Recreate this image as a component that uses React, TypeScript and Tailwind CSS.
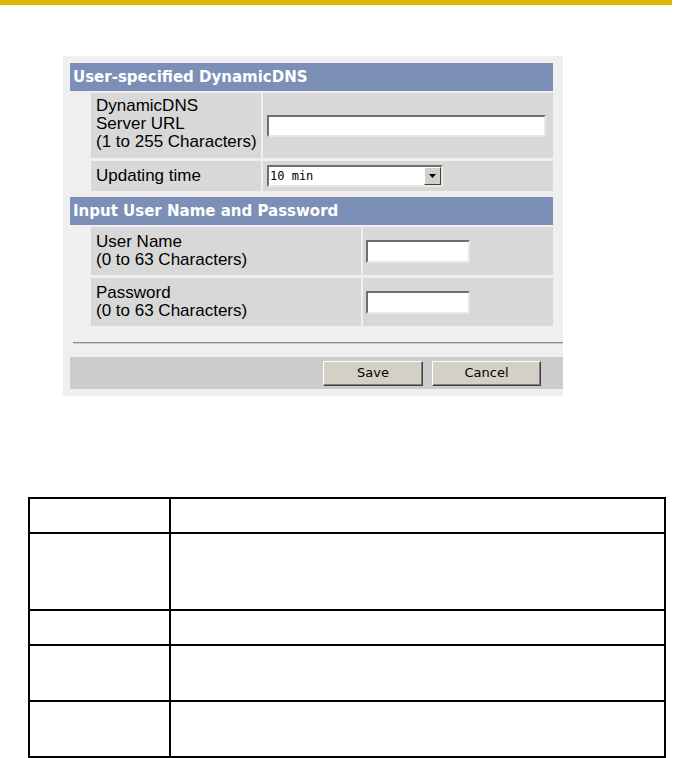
import { ReactNode } from "react";

const sans = { fontFamily: '"Liberation Sans", Arial, sans-serif' };

function SectionHeader({ children }: { children: ReactNode }) {
  return (
    <div
      className="h-[28px] mr-[10px] bg-[#7b8fb7] text-white font-bold text-[15px] leading-[28px] pl-[3px]"
      style={{ fontFamily: '"DejaVu Sans", Verdana, sans-serif' }}
    >
      {children}
    </div>
  );
}

function TextBox({ className }: { className: string }) {
  return (
    <div
      className={`bg-white border-2 border-t-[#6e6e6e] border-l-[#6e6e6e] border-b-[#e8e8e0] border-r-[#e8e8e0] ${className}`}
    />
  );
}

function Button({ label, width }: { label: string; width: string }) {
  return (
    <button
      className={`${width} h-[25px] bg-[#d4d0c8] border border-t-white border-l-white border-b-[#404040] border-r-[#404040] text-[13px] text-black shadow-[inset_-1px_-1px_0_#808080]`}
      style={{ fontFamily: '"DejaVu Sans", sans-serif' }}
    >
      {label}
    </button>
  );
}

export default function App() {
  return (
    <div className="w-[675px] h-[758px] bg-white" style={sans}>
      {/* top rule */}
      <div className="h-[5px] w-[672px] bg-[#dfb800]" />

      {/* settings panel */}
      <div className="ml-[63px] mt-[51px] w-[500px] bg-[#efefef] pt-[7px] pl-[7px] pb-[7px]">
        <SectionHeader>User-specified DynamicDNS</SectionHeader>

        <div className="mt-[2px] mr-[10px] pl-[21px] flex flex-col gap-[3px] text-[17px] leading-[18px] text-black">
          <div className="flex gap-[2px]">
            <div className="w-[170px] h-[65px] bg-[#d8d8d8] pl-[5px] pt-[4px]">
              DynamicDNS
              <br />
              Server URL
              <br />
              (1 to 255 Characters)
            </div>
            <div className="flex-1 bg-[#d8d8d8] flex items-center pl-[4px] pr-[7px]">
              <TextBox className="w-full h-[22px]" />
            </div>
          </div>
          <div className="flex gap-[2px]">
            <div className="w-[170px] h-[30px] bg-[#d8d8d8] pl-[5px] pt-[6px]">
              Updating time
            </div>
            <div className="flex-1 bg-[#d8d8d8] flex items-center pl-[4px]">
              <div className="w-[176px] h-[22px] bg-white border-2 border-t-[#6e6e6e] border-l-[#6e6e6e] border-b-[#e8e8e0] border-r-[#e8e8e0] flex items-center justify-between">
                <span
                  className="text-[12px] pl-[1px]"
                  style={{ fontFamily: '"DejaVu Sans Mono", monospace' }}
                >
                  10 min
                </span>
                <div className="w-[17px] h-[18px] bg-[#d4d0c8] border border-t-white border-l-white border-b-[#404040] border-r-[#404040] flex items-center justify-center">
                  <svg width="7" height="4" viewBox="0 0 7 4">
                    <path d="M0 0h7L3.5 4z" fill="#000" />
                  </svg>
                </div>
              </div>
            </div>
          </div>
        </div>

        <div className="mt-[6px]">
          <SectionHeader>Input User Name and Password</SectionHeader>
        </div>

        <div className="mt-[2px] mr-[10px] pl-[21px] flex flex-col gap-[3px] text-[17px] leading-[18px] text-black">
          {["User Name", "Password"].map((name) => (
            <div key={name} className="flex gap-[2px]">
              <div className="w-[270px] h-[48px] bg-[#d8d8d8] pl-[5px] pt-[6px]">
                {name}
                <br />
                (0 to 63 Characters)
              </div>
              <div className="flex-1 bg-[#d8d8d8] flex items-center pl-[3px]">
                <TextBox className="w-[104px] h-[23px]" />
              </div>
            </div>
          ))}
        </div>

        {/* divider */}
        <div className="mt-[16px] ml-[3px] h-[2px] border-t border-t-[#8a8a8a] border-b border-b-[#d0d0d0]" />

        {/* button bar */}
        <div className="mt-[13px] h-[32px] bg-[#cccccc] flex items-center justify-end gap-[9px] pr-[22px]">
          <Button label="Save" width="w-[100px]" />
          <Button label="Cancel" width="w-[109px]" />
        </div>
      </div>

      {/* description table */}
      <div className="mt-[101px] ml-[28px] w-[638px] border-2 border-black">
        {[35, 77, 35, 56, 56].map((h, i) => (
          <div
            key={i}
            className={`flex ${i > 0 ? "border-t-2 border-black" : ""}`}
            style={{ height: i === 0 ? h - 2 : h }}
          >
            <div className="w-[141px] border-r-2 border-black" />
            <div className="flex-1" />
          </div>
        ))}
      </div>
    </div>
  );
}
